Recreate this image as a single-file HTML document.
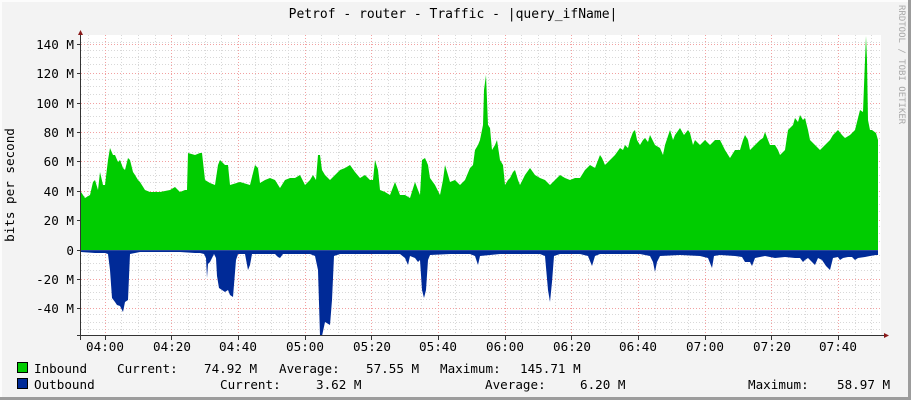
<!DOCTYPE html>
<html><head><meta charset="utf-8"><style>
html,body{margin:0;padding:0;background:#f3f3f3;}
svg{display:block;}
text{font-family:"DejaVu Sans Mono","Liberation Mono",monospace;fill:#000;}
</style></head><body>
<svg width="911" height="400" viewBox="0 0 911 400" xmlns="http://www.w3.org/2000/svg">
<rect x="0" y="0" width="911" height="400" fill="#f3f3f3"/>
<rect x="0" y="0" width="911" height="2" fill="#fcfcfc"/>
<rect x="0" y="0" width="2" height="400" fill="#fcfcfc"/>
<rect x="0" y="397" width="911" height="3" fill="#9c9c9c"/>
<rect x="908" y="0" width="3" height="400" fill="#9c9c9c"/>
<rect x="81" y="35" width="800" height="301" fill="#fff"/>
<g stroke="#d8d8d8" stroke-width="1" stroke-dasharray="1,2" id="minor">
<path d="M81 42.5H881M81 50.5H881M81 57.5H881M81 64.5H881M81 79.5H881M81 86.5H881M81 94.5H881M81 108.5H881M81 116.5H881M81 123.5H881M81 138.5H881M81 145.5H881M81 152.5H881M81 167.5H881M81 175.5H881M81 182.5H881M81 196.5H881M81 204.5H881M81 211.5H881M81 226.5H881M81 233.5H881M81 241.5H881M81 255.5H881M81 263.5H881M81 270.5H881M81 285.5H881M81 292.5H881M81 299.5H881M81 314.5H881M81 322.5H881M81 329.5H881"/>
<path d="M88.5 35V336M121.5 35V336M138.5 35V336M155.5 35V336M188.5 35V336M205.5 35V336M221.5 35V336M255.5 35V336M271.5 35V336M288.5 35V336M321.5 35V336M338.5 35V336M355.5 35V336M388.5 35V336M405.5 35V336M421.5 35V336M455.5 35V336M471.5 35V336M488.5 35V336M521.5 35V336M538.5 35V336M555.5 35V336M588.5 35V336M605.5 35V336M621.5 35V336M655.5 35V336M671.5 35V336M688.5 35V336M721.5 35V336M738.5 35V336M755.5 35V336M788.5 35V336M805.5 35V336M821.5 35V336M855.5 35V336M871.5 35V336"/>
</g>
<g stroke="#f2a0a0" stroke-width="1" stroke-dasharray="1,2">
<path d="M81 44.5H881M81 73.5H881M81 103.5H881M81 132.5H881M81 161.5H881M81 191.5H881M81 220.5H881M81 279.5H881M81 308.5H881"/>
<path d="M105.5 35V336M171.5 35V336M238.5 35V336M305.5 35V336M371.5 35V336M438.5 35V336M505.5 35V336M571.5 35V336M638.5 35V336M705.5 35V336M771.5 35V336M838.5 35V336"/>
</g>
<path fill="#00cc00" d="M81 250L81 192L85 198L90 195L93 182L95 180L98 190L100 172L103 185L105 185L108 160L110 148L113 155L115 155L118 162L120 160L123 168L125 170L128 158L130 160L133 172L135 175L138 180L140 182L145 190L150 192L160 192L170 190L175 187L180 192L185 190L187 190L188 153L195 155L200 153L202 153L205 180L210 183L215 185L218 165L220 160L225 165L228 165L230 185L240 182L250 185L255 165L258 168L260 183L265 180L270 178L275 180L280 188L285 180L290 178L295 178L300 175L305 185L310 180L313 175L316 180L318 155L320 155L322 170L325 175L330 180L335 175L340 170L345 168L350 165L355 172L360 178L365 175L370 180L373 180L375 160L378 170L380 190L385 192L390 195L395 182L400 195L405 195L410 198L415 182L418 190L420 195L422 160L425 158L428 165L430 178L435 185L440 195L443 180L445 165L448 175L450 182L455 180L460 185L465 180L470 168L473 165L475 150L478 145L480 140L483 125L484 90L486 75L487 100L488 125L490 128L492 150L495 145L497 140L500 160L503 165L505 185L508 180L510 178L513 172L515 170L518 180L520 185L525 175L530 168L535 175L540 178L545 180L550 185L555 180L560 175L565 178L570 180L575 178L580 178L585 170L590 165L595 168L600 155L602 158L605 165L608 162L610 160L615 155L620 148L623 150L625 145L628 148L630 140L633 132L635 130L637 140L640 145L643 140L645 138L648 142L650 135L655 145L660 148L663 155L665 145L670 130L673 140L675 135L680 128L684 135L688 130L690 133L693 145L695 140L700 145L705 140L710 145L715 140L720 140L725 150L730 158L735 150L740 150L743 140L745 135L748 140L750 150L755 145L760 140L763 138L765 132L768 140L770 145L775 145L778 150L780 155L785 150L788 130L790 128L793 125L795 118L798 122L800 115L803 120L805 118L808 130L810 140L815 145L820 150L825 145L830 140L833 135L838 130L842 135L845 138L850 135L855 130L858 118L860 110L863 112L865 60L866 36L867 60L868 120L870 130L872 130L876 133L878 140L878 250Z"/>
<path fill="#002a97" d="M81 250L81 252L95 253L105 253L108 254L110 270L112 298L115 302L117 305L120 306L123 312L125 302L128 300L130 254L140 252L160 252L180 252L195 253L200 253L204 254L206 258L207 278L208 264L210 262L212 258L214 254L216 258L217 276L219 288L222 290L225 292L228 290L230 295L233 297L236 260L238 254L245 254L248 270L250 265L252 254L260 254L275 254L278 257L280 258L283 254L300 254L310 254L315 256L318 270L320 336L322 336L325 322L330 325L332 300L334 256L340 254L360 254L380 254L400 254L405 258L408 265L410 256L415 258L418 262L420 260L422 290L424 298L426 290L428 260L430 255L450 254L470 254L475 256L478 265L480 256L500 254L520 254L540 254L545 256L548 290L550 302L552 282L554 256L560 254L580 254L588 256L592 266L595 256L600 254L620 254L640 254L650 256L653 262L655 272L657 262L660 256L680 255L700 256L708 258L712 268L714 256L720 255L735 256L742 257L745 262L750 262L752 266L755 258L765 256L775 258L785 257L795 258L800 258L803 262L805 260L808 258L812 262L815 265L818 258L822 260L826 266L830 270L833 258L838 257L840 260L843 258L848 257L852 257L855 260L858 258L865 257L870 256L876 255L878 255L878 250Z"/>
<line x1="81" y1="250.5" x2="878" y2="250.5" stroke="#2a4a9a" stroke-width="1"/>
<line x1="80.5" y1="35" x2="80.5" y2="340" stroke="#333" stroke-width="1"/>
<line x1="77" y1="335.5" x2="884" y2="335.5" stroke="#333" stroke-width="1"/>
<path d="M78 35L83 35L80.5 30Z" fill="#8b1a1a"/>
<path d="M884 333L884 338L889 335.5Z" fill="#8b1a1a"/>
<g stroke="#333" stroke-width="1">
<path d="M77 44.5H81M77 73.5H81M77 103.5H81M77 132.5H81M77 161.5H81M77 191.5H81M77 220.5H81M77 250.5H81M77 279.5H81M77 308.5H81"/>
<path d="M105.5 336V340M171.5 336V340M238.5 336V340M305.5 336V340M371.5 336V340M438.5 336V340M505.5 336V340M571.5 336V340M638.5 336V340M705.5 336V340M771.5 336V340M838.5 336V340"/>
</g>
<g font-size="12.6" text-anchor="end">
<text x="74" y="49">140 M</text>
<text x="74" y="78">120 M</text>
<text x="74" y="108">100 M</text>
<text x="74" y="137">80 M</text>
<text x="74" y="166">60 M</text>
<text x="74" y="196">40 M</text>
<text x="74" y="225">20 M</text>
<text x="74" y="255">0</text>
<text x="74" y="284">-20 M</text>
<text x="74" y="313">-40 M</text>
</g>
<g font-size="12.6" text-anchor="middle">
<text x="105" y="351">04:00</text>
<text x="172" y="351">04:20</text>
<text x="238" y="351">04:40</text>
<text x="305" y="351">05:00</text>
<text x="372" y="351">05:20</text>
<text x="438" y="351">05:40</text>
<text x="505" y="351">06:00</text>
<text x="572" y="351">06:20</text>
<text x="638" y="351">06:40</text>
<text x="705" y="351">07:00</text>
<text x="772" y="351">07:20</text>
<text x="838" y="351">07:40</text>
</g>
<text x="453" y="18" font-size="13" text-anchor="middle">Petrof - router - Traffic - |query_ifName|</text>
<text transform="translate(14,185) rotate(-90)" font-size="12.6" text-anchor="middle">bits per second</text>
<text transform="translate(899,5) rotate(90)" font-size="9" fill="#a8a8a8" style="fill:#a8a8a8">RRDTOOL / TOBI OETIKER</text>
<rect x="17.5" y="362.5" width="10" height="10" fill="#00cc00" stroke="#000"/>
<rect x="17.5" y="378.5" width="10" height="10" fill="#002a97" stroke="#000"/>
<g font-size="12.6" xml:space="preserve">
<text x="34" y="373">Inbound</text>
<text x="117" y="373">Current:</text>
<text x="204" y="373">74.92 M</text>
<text x="279" y="373">Average:</text>
<text x="366" y="373">57.55 M</text>
<text x="440" y="373">Maximum:</text>
<text x="520" y="373">145.71 M</text>
<text x="34" y="389">Outbound</text>
<text x="220" y="389">Current:</text>
<text x="316" y="389">3.62 M</text>
<text x="485" y="389">Average:</text>
<text x="580" y="389">6.20 M</text>
<text x="748" y="389">Maximum:</text>
<text x="837" y="389">58.97 M</text>
</g>
</svg>
</body></html>
